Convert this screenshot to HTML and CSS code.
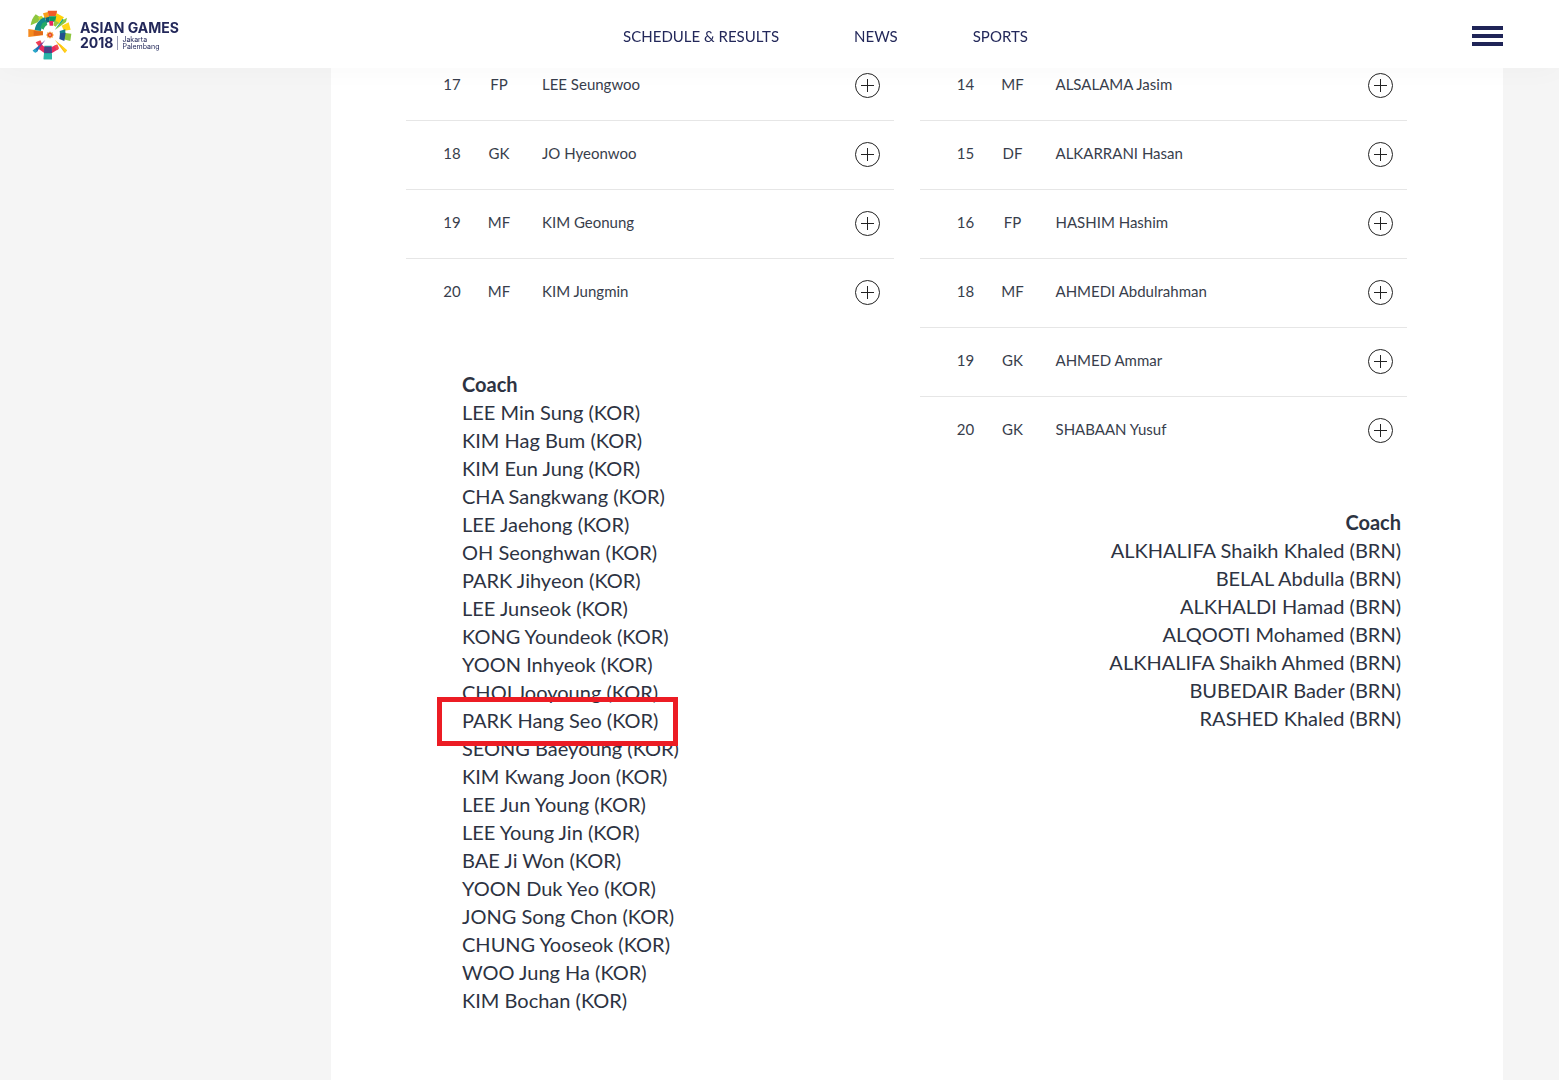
FILE: index.html
```html
<!DOCTYPE html>
<html lang="en">

<head>
  <meta charset="UTF-8">
  <meta name="viewport" content="width=device-width, initial-scale=1.0">
  <title>Asian Games 2018 - Football</title>
  <link rel="stylesheet" href="styles.css">
</head>

<body>
  <svg class="sprite" aria-hidden="true">
    <symbol id="plus" viewBox="0 0 25 25">
      <circle cx="12.5" cy="12.5" r="12" fill="none" stroke="#222" />
      <path d="M6 12.5h13M12.5 6v13" stroke="#222" />
    </symbol>
  </svg>

  <header class="header">
    <a class="logo" href="#">
      <svg class="logo-mark" viewBox="84 31 132 150" aria-hidden="true">
        <!-- outer blocks -->
        <path fill="#f8a11b" d="M129 41l15-4 4 18-13 4z" />
        <path fill="#f05a28" d="M143 33h28l-2 17h-23z" />
        <path fill="#fdd20a" d="M170 41l22 12-16 20-16-9z" />
        <path fill="#8dc63f" d="M107 44l16 10-10 14-21 9c2-14 6-23 15-33z" />
        <path fill="#c3d82e" d="M114 53l10-5 8 8-12 8z" />
        <path fill="#f58a1f" d="M85 88l44 7v12l-44 5z" />
        <path fill="#e06a1b" d="M101 93l28 3v9l-28 3z" />
        <path fill="#ffd61a" d="M185 78l21-10 6 22-20 3z" />
        <path fill="#8dc63f" d="M190 99l24 3-3 22-21-5z" />
        <path fill="#1fa99d" d="M133 138h22l1 41h-25z" />
        <path fill="#ef3e55" d="M107 128l14-6 6 11-10 8z" />
        <!-- ring -->
        <path fill="#128a8c" d="M104 91c3-18 14-33 31-38l5 17c-9 3-15 10-17 24z" />
        <path fill="#27a964" d="M121 84l6-13 12-6 3 11c-6 3-10 8-11 14z" />
        <path fill="#0a9b60" d="M147 50h22l-4 16h-16z" />
        <path fill="#0c6b78" d="M137 54l11-3 1 16-10 2z" />
        <path fill="#e6245f" d="M147 64h13l-1 14h-10z" />
        <path fill="#96c93d" d="M164 62l13 7-10 12-7-4z" />
        <path fill="#14838c" d="M179 94l17-5v11l-16 4z" />
        <path fill="#21508f" d="M180 101l17-2-4 25-15-6z" />
        <path fill="#ea2c5e" d="M121 130l9 9 5 3-2 18-20-14z" />
        <path fill="#ea2c5e" d="M155 142l12-6 9 12-20 12z" />
        <path fill="#f04a50" d="M163 138l9-4 5 12-6 6z" />
        <path fill="#4d3f86" d="M133 141h22l1 19h-24z" />
        <path fill="#2cb5a8" d="M132 163h24v16h-25z" />
        <!-- diagonal rays -->
        <path fill="#00a79d" d="M164 91l24-34 6 6z" />
        <path fill="#8dc63f" d="M166 90l24-29 11-7-3 13z" />
        <path fill="#fdb913" d="M164 120l37 32-7 8z" />
        <path fill="#ffd61a" d="M178 131l23 21-5 7z" />
        <path fill="#7b3f98" d="M136 121l-24 33-6-7z" />
        <path fill="#1b75bb" d="M121 136l-10 22-13-5z" />
        <path fill="#29a9c9" d="M104 147l8 6-6 7-8-7z" />
        <!-- sun -->
        <path fill="#f58a1f" d="M150 95l3 4 5-1v5l4 3-4 3v5l-5-1-3 4-3-4-5 1v-5l-4-3 4-3v-5l5 1z" />
        <circle cx="150" cy="106" r="6" fill="#e0402f" />
        <circle cx="150" cy="106" r="2" fill="#fff" />
      </svg>
      <span class="logo-text">
        <span class="logo-title">ASIAN GAMES</span>
        <span class="logo-bottom">
          <span class="logo-year">2018</span>
          <span class="logo-city">Jakarta<br>Palembang</span>
        </span>
      </span>
    </a>

    <nav class="nav">
      <a href="#">SCHEDULE &amp; RESULTS</a>
      <a href="#">NEWS</a>
      <a href="#">SPORTS</a>
    </nav>

    <button class="menu-btn" aria-label="Menu">
      <span></span>
      <span></span>
      <span></span>
    </button>
  </header>

  <main class="content">
    <section class="team">
      <table class="players">
        <tr>
          <td class="number">17</td>
          <td class="position">FP</td>
          <td class="name">LEE Seungwoo</td>
          <td class="more"><button class="plus-btn" aria-label="Show LEE Seungwoo"><svg><use href="#plus" /></svg></button></td>
        </tr>
        <tr>
          <td class="number">18</td>
          <td class="position">GK</td>
          <td class="name">JO Hyeonwoo</td>
          <td class="more"><button class="plus-btn" aria-label="Show JO Hyeonwoo"><svg><use href="#plus" /></svg></button></td>
        </tr>
        <tr>
          <td class="number">19</td>
          <td class="position">MF</td>
          <td class="name">KIM Geonung</td>
          <td class="more"><button class="plus-btn" aria-label="Show KIM Geonung"><svg><use href="#plus" /></svg></button></td>
        </tr>
        <tr>
          <td class="number">20</td>
          <td class="position">MF</td>
          <td class="name">KIM Jungmin</td>
          <td class="more"><button class="plus-btn" aria-label="Show KIM Jungmin"><svg><use href="#plus" /></svg></button></td>
        </tr>
      </table>

      <div class="coaches">
        <h3>Coach</h3>
        <ul>
          <li>LEE Min Sung (KOR)</li>
          <li>KIM Hag Bum (KOR)</li>
          <li>KIM Eun Jung (KOR)</li>
          <li>CHA Sangkwang (KOR)</li>
          <li>LEE Jaehong (KOR)</li>
          <li>OH Seonghwan (KOR)</li>
          <li>PARK Jihyeon (KOR)</li>
          <li>LEE Junseok (KOR)</li>
          <li>KONG Youndeok (KOR)</li>
          <li>YOON Inhyeok (KOR)</li>
          <li>CHOI Jooyoung (KOR)</li>
          <li class="highlight">PARK Hang Seo (KOR)</li>
          <li>SEONG Baeyoung (KOR)</li>
          <li>KIM Kwang Joon (KOR)</li>
          <li>LEE Jun Young (KOR)</li>
          <li>LEE Young Jin (KOR)</li>
          <li>BAE Ji Won (KOR)</li>
          <li>YOON Duk Yeo (KOR)</li>
          <li>JONG Song Chon (KOR)</li>
          <li>CHUNG Yooseok (KOR)</li>
          <li>WOO Jung Ha (KOR)</li>
          <li>KIM Bochan (KOR)</li>
        </ul>
      </div>
    </section>

    <section class="team">
      <table class="players">
        <tr>
          <td class="number">14</td>
          <td class="position">MF</td>
          <td class="name">ALSALAMA Jasim</td>
          <td class="more"><button class="plus-btn" aria-label="Show ALSALAMA Jasim"><svg><use href="#plus" /></svg></button></td>
        </tr>
        <tr>
          <td class="number">15</td>
          <td class="position">DF</td>
          <td class="name">ALKARRANI Hasan</td>
          <td class="more"><button class="plus-btn" aria-label="Show ALKARRANI Hasan"><svg><use href="#plus" /></svg></button></td>
        </tr>
        <tr>
          <td class="number">16</td>
          <td class="position">FP</td>
          <td class="name">HASHIM Hashim</td>
          <td class="more"><button class="plus-btn" aria-label="Show HASHIM Hashim"><svg><use href="#plus" /></svg></button></td>
        </tr>
        <tr>
          <td class="number">18</td>
          <td class="position">MF</td>
          <td class="name">AHMEDI Abdulrahman</td>
          <td class="more"><button class="plus-btn" aria-label="Show AHMEDI Abdulrahman"><svg><use href="#plus" /></svg></button></td>
        </tr>
        <tr>
          <td class="number">19</td>
          <td class="position">GK</td>
          <td class="name">AHMED Ammar</td>
          <td class="more"><button class="plus-btn" aria-label="Show AHMED Ammar"><svg><use href="#plus" /></svg></button></td>
        </tr>
        <tr>
          <td class="number">20</td>
          <td class="position">GK</td>
          <td class="name">SHABAAN Yusuf</td>
          <td class="more"><button class="plus-btn" aria-label="Show SHABAAN Yusuf"><svg><use href="#plus" /></svg></button></td>
        </tr>
      </table>

      <div class="coaches coaches-right">
        <h3>Coach</h3>
        <ul>
          <li>ALKHALIFA Shaikh Khaled (BRN)</li>
          <li>BELAL Abdulla (BRN)</li>
          <li>ALKHALDI Hamad (BRN)</li>
          <li>ALQOOTI Mohamed (BRN)</li>
          <li>ALKHALIFA Shaikh Ahmed (BRN)</li>
          <li>BUBEDAIR Bader (BRN)</li>
          <li>RASHED Khaled (BRN)</li>
        </ul>
      </div>
    </section>
  </main>
</body>

</html>
```
FILE: styles.css
```css
*,
*::before,
*::after {
  box-sizing: border-box;
}

body {
  margin: 0;
  font-family: Lato, "Liberation Sans", sans-serif;
  color: #2d3342;
  background-color: #f5f5f5;
}

button {
  border: none;
  padding: 0;
  background: none;
  cursor: pointer;
}

.sprite {
  display: none;
}

/* Header */

.header {
  position: fixed;
  top: 0;
  left: 0;
  right: 0;
  z-index: 10;
  display: flex;
  justify-content: space-between;
  align-items: center;
  height: 68px;
  padding: 4px 56px 0 28px;
  background-color: #fff;
  box-shadow: 0 0 30px rgba(0, 0, 0, 0.03);
}

.logo {
  display: flex;
  align-items: center;
  gap: 8px;
  padding-bottom: 2px;
  color: #23285a;
  text-decoration: none;
}

.logo-mark {
  width: 44px;
  height: 50px;
}

.logo-text {
  font-family: Inter, "Liberation Sans", sans-serif;
}

.logo-title,
.logo-year {
  display: block;
  font-size: 14px;
  font-weight: 700;
  line-height: 15px;
}

.logo-bottom {
  display: flex;
  align-items: center;
  gap: 4px;
}

.logo-city {
  padding-left: 4px;
  border-left: 1px solid #9a9cb3;
  font-size: 7px;
  line-height: 7px;
}

.nav {
  display: flex;
  gap: 75px;
}

.nav a {
  font-size: 15px;
  line-height: 20px;
  color: #23285a;
  text-decoration: none;
}

.menu-btn {
  display: flex;
  flex-direction: column;
  gap: 4px;
  width: 31px;
}

.menu-btn span {
  width: 100%;
  height: 4px;
  background-color: #1f2457;
}

/* Teams */

.content {
  display: grid;
  grid-template-columns: 1fr 1fr;
  gap: 26px;
  min-height: 100vh;
  margin: 0 56px 0 331px;
  padding: 52px 96px 65px 75px;
  background-color: #fff;
}

.players {
  width: 100%;
  table-layout: fixed;
  border-spacing: 0;
  font-size: 15px;
  color: #383e4c;
}

.players td {
  height: 69px;
  padding: 0 0 5px;
  border-bottom: 1px solid #e6e6e6;
}

.players tr:last-child td {
  border-bottom-color: transparent;
}

.players .number {
  width: 70px;
  padding-left: 22px;
  text-align: center;
}

.players .position {
  width: 46px;
  text-align: center;
}

.players .name {
  padding-left: 20px;
}

.players .more {
  width: 60px;
  padding: 0 14px 1px 0;
  text-align: right;
}

.plus-btn {
  width: 25px;
  height: 25px;
  vertical-align: middle;
}

.plus-btn svg {
  display: block;
  width: 100%;
  height: 100%;
}

.coaches {
  margin-top: 42px;
  padding-left: 56px;
  font-size: 20px;
  line-height: 28px;
}

.coaches-right {
  padding: 0 6px 0 0;
  text-align: right;
}

.coaches h3 {
  margin: 0;
  font-size: 20px;
  font-weight: 700;
}

.coaches ul {
  margin: 0;
  padding: 0;
  list-style: none;
}

.highlight {
  position: relative;
  width: fit-content;
}

.highlight::after {
  content: '';
  position: absolute;
  top: -9px;
  bottom: -12px;
  left: -25px;
  right: -20px;
  border: 5px solid #ec1c24;
}
```
